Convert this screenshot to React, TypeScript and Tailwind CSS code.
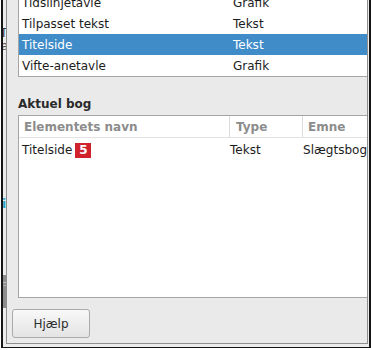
import React from 'react';

type Row = { name: string; type: string; selected?: boolean };

const libraryRows: Row[] = [
  { name: 'Tidslinjetavle', type: 'Grafik' },
  { name: 'Tilpasset tekst', type: 'Tekst' },
  { name: 'Titelside', type: 'Tekst', selected: true },
  { name: 'Vifte-anetavle', type: 'Grafik' },
];

// sliver of the main window peeking out behind the dialog
const LeftStrip: React.FC = () => (
  <div className="w-[3px] shrink-0 bg-[#ececec] overflow-hidden flex flex-col text-[12px] leading-[12px]">
    <div className="h-[27px] shrink-0" />
    <span className="-ml-[3px] text-[#2b3a4a] whitespace-nowrap">T</span>
    <span className="-ml-[2px] mt-[1px] text-[#555] whitespace-nowrap">a</span>
    <div className="h-[146px] shrink-0" />
    <span className="-ml-[1px] text-[#22a6c8] font-bold whitespace-nowrap">ir</span>
    <div className="h-[65px] shrink-0" />
    <div className="h-[33px] shrink-0 bg-[#8d8d8d] flex flex-col">
      <div className="h-[7px]" />
      <div className="h-px bg-[#c4c4c4]" />
      <div className="h-[2px]" />
      <div className="h-px bg-[#b0b0b0]" />
    </div>
  </div>
);

const TopList: React.FC = () => (
  <div className="-mt-[8px] ml-[11px] bg-white border-l border-b border-[#a5a5a5]">
    {libraryRows.map(r => (
      <div
        key={r.name}
        className={`h-[21px] flex items-center text-[12px] ${r.selected ? 'bg-[#3f8cc9] text-white' : 'text-[#1c1c1c]'}`}
      >
        <span className="w-[210px] pl-[3px] whitespace-nowrap">{r.name}</span>
        <span className="pl-[4px] whitespace-nowrap">{r.type}</span>
      </div>
    ))}
  </div>
);

const CurrentBook: React.FC = () => (
  <div className="ml-[11px] h-[183px] bg-white border-l border-t border-b border-[#a5a5a5] overflow-hidden flex flex-col">
    <div className="h-[22px] shrink-0 flex border-b border-[#e3e3e3] text-[12px] font-bold text-[#8c8c8c]">
      <div className="w-[210px] pl-[5px] flex items-center">Elementets navn</div>
      <div className="w-[73px] pl-[6px] flex items-center border-l border-[#dcdcdc]">Type</div>
      <div className="flex-1 pl-[5px] flex items-center border-l border-[#dcdcdc]">Emne</div>
    </div>
    <div className="h-[24px] flex items-center text-[12px] text-[#1c1c1c] whitespace-nowrap">
      <div className="w-[210px] pl-[3px] flex items-center gap-[3px]">
        <span>Titelside</span>
        <span className="w-[16px] h-[15px] bg-[#d0222d] text-white font-bold text-[12px] flex items-center justify-center">5</span>
      </div>
      <div className="w-[73px] pl-[4px]">Tekst</div>
      <div className="flex-1 pl-[5px]">Slægtsbog</div>
    </div>
  </div>
);

export default function App() {
  return (
    <div className="w-[371px] h-[350px] bg-white overflow-hidden font-['DejaVu_Sans',sans-serif]">
      <div className="ml-[1px] w-[370px] h-[348px] border-l-2 border-r-2 border-b border-[#161616] bg-[#ececec] flex flex-col">
        <div className="h-[344px] flex">
          <LeftStrip />
          <div className="w-[362px] h-[344px] bg-[#eaeaea] border-l border-r border-b border-[#8e8e8e] flex flex-col overflow-hidden">
            <TopList />
            <div className="h-[21px] shrink-0 ml-[11px] mt-[16px] flex items-center text-[12px] font-bold text-[#2a2a2a]">
              Aktuel bog
            </div>
            <div className="h-[1px] shrink-0" />
            <CurrentBook />
            <div className="h-[11px] shrink-0" />
            <button className="ml-[5px] w-[78px] h-[29px] rounded-[3px] border border-[#ababab] bg-gradient-to-b from-[#f8f8f8] to-[#e4e4e4] text-[12px] text-[#2e2e2e]">
              Hjælp
            </button>
          </div>
        </div>
      </div>
    </div>
  );
}
